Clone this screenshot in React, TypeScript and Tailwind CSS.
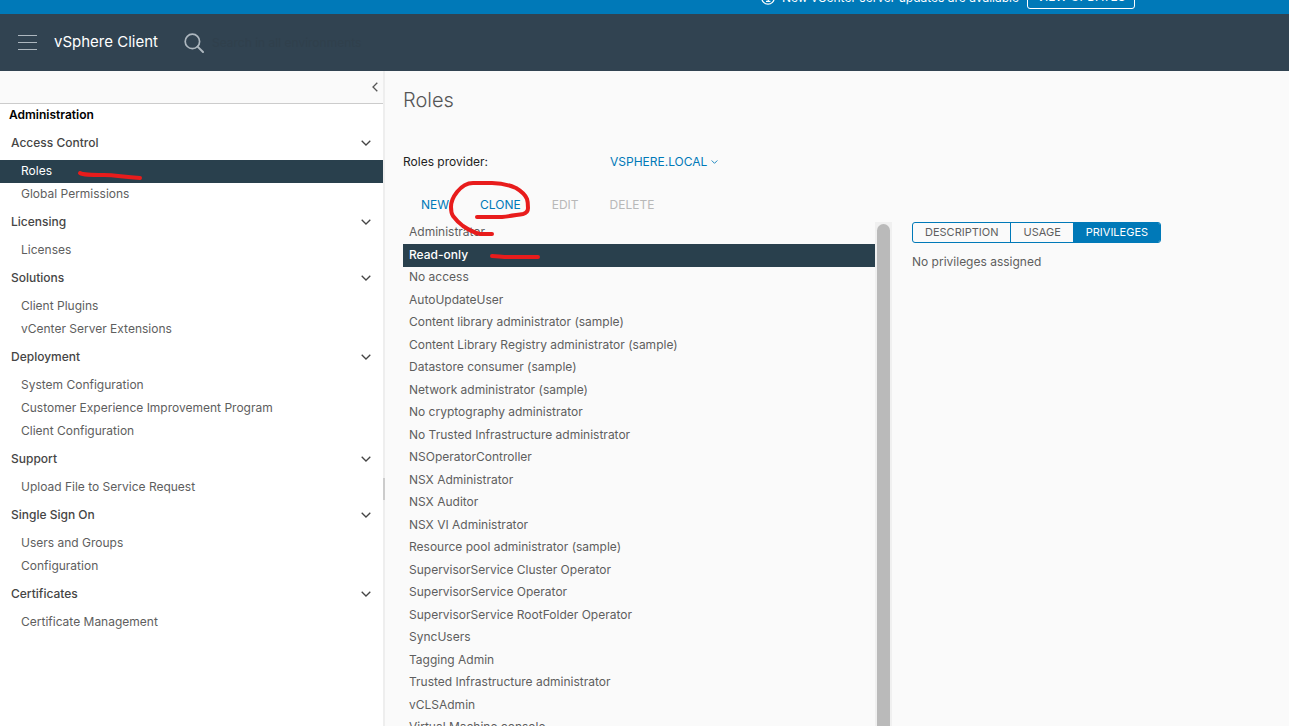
import React, { useState } from "react";

type Section = {
  title: string;
  items: string[];
};

const SECTIONS: Section[] = [
  { title: "Access Control", items: ["Roles", "Global Permissions"] },
  { title: "Licensing", items: ["Licenses"] },
  { title: "Solutions", items: ["Client Plugins", "vCenter Server Extensions"] },
  {
    title: "Deployment",
    items: [
      "System Configuration",
      "Customer Experience Improvement Program",
      "Client Configuration",
    ],
  },
  { title: "Support", items: ["Upload File to Service Request"] },
  { title: "Single Sign On", items: ["Users and Groups", "Configuration"] },
  { title: "Certificates", items: ["Certificate Management"] },
];

const ROLES = [
  "Administrator",
  "Read-only",
  "No access",
  "AutoUpdateUser",
  "Content library administrator (sample)",
  "Content Library Registry administrator (sample)",
  "Datastore consumer (sample)",
  "Network administrator (sample)",
  "No cryptography administrator",
  "No Trusted Infrastructure administrator",
  "NSOperatorController",
  "NSX Administrator",
  "NSX Auditor",
  "NSX VI Administrator",
  "Resource pool administrator (sample)",
  "SupervisorService Cluster Operator",
  "SupervisorService Operator",
  "SupervisorService RootFolder Operator",
  "SyncUsers",
  "Tagging Admin",
  "Trusted Infrastructure administrator",
  "vCLSAdmin",
  "Virtual Machine console",
];

const TABS = ["DESCRIPTION", "USAGE", "PRIVILEGES"];

function Chevron({ className }: { className: string }) {
  return (
    <svg viewBox="0 0 10 6" fill="none" stroke="currentColor" className={className} aria-hidden="true">
      <path d="M0.7 0.7 5 5 9.3 0.7" strokeWidth="1.3" />
    </svg>
  );
}

function Banner() {
  return (
    <div className="flex h-[14px] shrink-0 items-end overflow-hidden bg-[#0079b8] pb-[5px] pl-[761px] text-white">
      <div className="flex h-6 shrink-0 items-center">
        <svg viewBox="0 0 14 14" fill="none" stroke="currentColor" className="mt-[2px] size-[14px]" aria-hidden="true">
          <circle cx="7" cy="7" r="6.2" strokeWidth="1.3" />
          <path d="M5.3 6h2v4.3M5 10.4h4.4M6.5 3.6h1.2" strokeWidth="1.3" />
        </svg>
        <span className="w-[252px] pt-[2px] pl-[7px] text-[12px] whitespace-nowrap">
          New vCenter server updates are available
        </span>
        <button type="button" className="h-6 w-[108px] rounded-[3px] border border-white text-[12px]">
          VIEW UPDATES
        </button>
      </div>
    </div>
  );
}

function Header() {
  return (
    <header className="flex h-[57px] shrink-0 items-center bg-[#314351] text-white">
      <button type="button" aria-label="Menu" className="ml-[18px] flex w-[19px] flex-col gap-[6px]">
        <span className="h-px w-full bg-[#adb7bf]" />
        <span className="h-px w-full bg-[#adb7bf]" />
        <span className="h-px w-full bg-[#adb7bf]" />
      </button>
      <a href="#" className="ml-[17px] w-[130px] text-[15px] whitespace-nowrap">
        vSphere Client
      </a>
      <label htmlFor="search" aria-label="Search">
        <svg viewBox="0 0 20 20" fill="none" stroke="#adb7bf" className="size-5">
          <circle cx="8.4" cy="8.4" r="7.2" strokeWidth="1.7" />
          <path d="M13.6 13.6 19 19" strokeWidth="2" strokeLinecap="round" />
        </svg>
      </label>
      <input
        id="search"
        type="text"
        placeholder="Search in all environments"
        className="ml-2 w-[200px] bg-transparent text-[12px] outline-none placeholder:text-[#30404c]"
      />
    </header>
  );
}

function Sidebar() {
  return (
    <aside className="flex w-[383px] shrink-0 flex-col bg-white">
      <div className="flex h-[33px] items-center justify-end border-b border-[#cccccc] bg-[#fafafa] pr-[3px]">
        <button type="button" aria-label="Collapse" className="text-[#565656]">
          <Chevron className="h-[6px] w-[10px] rotate-90" />
        </button>
      </div>
      <h2 className="h-[23px] pl-[9px] text-[12px] leading-[22px] font-semibold text-black">Administration</h2>

      <nav>
        {SECTIONS.map((section) => (
          <section key={section.title}>
            <button
              type="button"
              className="flex h-[33px] w-full items-center justify-between pr-3 pb-[2px] pl-[11px] text-[12px] font-medium text-[#454545]"
            >
              {section.title}
              <Chevron className="mt-px h-[6px] w-[10px]" />
            </button>
            {section.items.map((item) => (
              <a
                key={item}
                href="#"
                className={
                  item === "Roles"
                    ? "block h-[23px] bg-[#29404d] pl-[21px] text-[12px] leading-[22px] text-white"
                    : "block h-[23px] pl-[21px] text-[12px] leading-[22px] text-[#5e5e5e]"
                }
              >
                {item}
              </a>
            ))}
          </section>
        ))}
      </nav>
    </aside>
  );
}

function RoleList() {
  const [selected, setSelected] = useState("Read-only");

  return (
    <div className="flex min-h-0 flex-1 overflow-hidden">
      <ul className="flex-1">
        {ROLES.map((role) => (
          <li key={role} className="odd:h-[22px] even:h-[23px]">
            <button
              type="button"
              onClick={() => setSelected(role)}
              className={
                role === selected
                  ? "block h-full w-full bg-[#29404d] pb-[2px] pl-[6px] text-left text-[12px] leading-5 font-medium text-white"
                  : "block h-full w-full pb-[2px] pl-[6px] text-left text-[12px] leading-5 text-[#5e5e5e]"
              }
            >
              {role}
            </button>
          </li>
        ))}
      </ul>
      {/* scrollbar */}
      <div className="w-[17px] bg-[#f0f0f0] px-[2px] pt-[2px]">
        <div className="h-full rounded-t-full bg-[#bababa]" />
      </div>
    </div>
  );
}

function Details() {
  const [tab, setTab] = useState("PRIVILEGES");

  return (
    <div className="pt-[151px] pl-5">
      <div className="flex h-[21px] overflow-hidden rounded-[3px] border border-[#0079b8] text-[11px]">
        {TABS.map((name) => (
          <button
            key={name}
            type="button"
            onClick={() => setTab(name)}
            className={
              name === tab
                ? "bg-[#0079b8] px-3 text-white"
                : "border-r border-[#0079b8] px-3 text-[#5e5e5e]"
            }
          >
            {name}
          </button>
        ))}
      </div>
      <p className="pt-[9px] text-[12px] leading-5 text-[#5e5e5e]">No privileges assigned</p>
    </div>
  );
}

/* red pen marks drawn over the page */
function PenMarks() {
  return (
    <svg
      viewBox="0 0 540 270"
      fill="none"
      stroke="#e81c1c"
      strokeWidth="4"
      strokeLinecap="round"
      strokeLinejoin="round"
      className="pointer-events-none absolute top-0 left-0 h-[270px] w-[540px]"
      aria-hidden="true"
    >
      <path d="M80 173c3 2 10 2 24 2 12 0 18 2 36 3" />
      <path d="M492 256c6 0 9 1 17 1h29" />
      <path d="M477 217h25c8-1 14-2 21-3 4-1 5-3 5-6 0-4 0-6-1-9-2-5-6-8-11-11-7-3-15-5-24-5h-19c-7 0-12 4-16 9-4 5-6 9-6 15 0 4 0 6 2 9 3 4 6 7 10 10 6 4 11 7 17 8h12" />
    </svg>
  );
}

export default function App() {
  return (
    <div className="relative flex h-screen flex-col overflow-hidden bg-[#fafafa] font-['Inter',sans-serif]">
      <Banner />
      <Header />

      <div className="flex min-h-0 flex-1">
        <Sidebar />
        <div className="flex w-[2px] shrink-0 items-center bg-[#eeeeee] pt-[180px]">
          <div className="h-[22px] w-full bg-[#cccccc]" />
        </div>

        <main className="flex min-w-0 flex-1 pl-[18px]">
          <div className="flex w-[489px] shrink-0 flex-col">
            <h1 className="pt-[15px] text-[20px] leading-7 font-light text-[#565656]">Roles</h1>
            <div className="mt-[38px] flex h-5 items-center text-[12px]">
              <span className="w-[207px] text-[#222222]">Roles provider:</span>
              <button type="button" className="flex items-center gap-1 text-[#0079b8]">
                VSPHERE.LOCAL
                <Chevron className="h-[4px] w-[7px]" />
              </button>
            </div>
            <div className="mt-[23px] mb-[7px] flex h-5 items-center gap-[31px] pl-[18px] text-[12px] text-[#0079b8]">
              <button type="button">NEW</button>
              <button type="button">CLONE</button>
              <button type="button" disabled className="text-[#b8b8b8]">EDIT</button>
              <button type="button" disabled className="text-[#b8b8b8]">DELETE</button>
            </div>
            <RoleList />
          </div>
          <Details />
        </main>
      </div>

      <PenMarks />
    </div>
  );
}
